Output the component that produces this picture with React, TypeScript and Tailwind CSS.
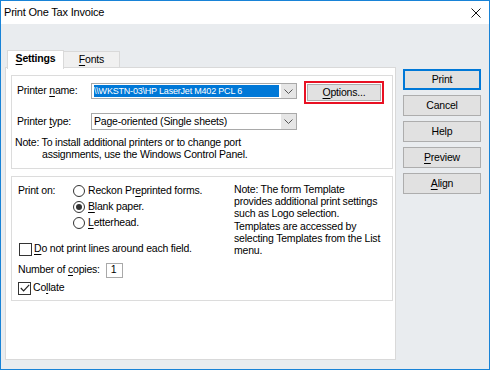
import React from "react";

const font = "font-['Liberation_Sans',Arial,sans-serif] text-[10.5px] tracking-[-0.2px]";

const U = ({ children }: { children: React.ReactNode }) => (
  <span className="underline underline-offset-[1.5px] decoration-[1px]">{children}</span>
);

const Chevron = () => (
  <svg width="9" height="5" viewBox="0 0 9 5" fill="none">
    <path d="M0.5 0.5 L4.5 4.5 L8.5 0.5" stroke="#555" strokeWidth="1" />
  </svg>
);

const Combo = ({ children }: { children: React.ReactNode }) => (
  <div className="w-[206px] h-full border border-[#a9a9a9] bg-white flex items-stretch">
    <div className="flex-1 min-w-0 flex items-center pl-[2px] overflow-hidden">{children}</div>
    <div className="w-[16px] bg-[#e6e6e6] border-l border-white flex items-center justify-center">
      <Chevron />
    </div>
  </div>
);

const Radio = ({ checked, children }: { checked?: boolean; children: React.ReactNode }) => (
  <div className="h-[16px] flex items-center gap-[3px]">
    <div className="w-[12px] h-[12px] rounded-full border border-[#333] bg-white flex items-center justify-center">
      {checked && <div className="w-[6px] h-[6px] rounded-full bg-[#333]" />}
    </div>
    <span>{children}</span>
  </div>
);

const Check = ({ checked }: { checked?: boolean }) => (
  <div className="w-[13px] h-[13px] border border-[#333] bg-white flex items-center justify-center">
    {checked && (
      <svg width="10" height="8" viewBox="0 0 10 8" fill="none">
        <path d="M0.8 4 L3.6 6.8 L9.2 0.8" stroke="#222" strokeWidth="1.2" />
      </svg>
    )}
  </div>
);

const SideButton = ({ children, primary }: { children: React.ReactNode; primary?: boolean }) => (
  <div
    className={`h-[21px] flex items-center justify-center bg-[#e1e1e1] ${
      primary ? "border-2 border-[#0078d7]" : "border border-[#adadad]"
    }`}
  >
    {children}
  </div>
);

export default function App() {
  return (
    <div className={`w-[490px] h-[370px] border border-[#1883d7] flex flex-col bg-[#e9ecef] text-black overflow-hidden ${font}`}>
      {/* Title bar */}
      <div className="h-[23px] bg-white flex items-center justify-between pl-[3px] pr-[8px]">
        <span className="text-[11px]">Print One Tax Invoice</span>
        <svg width="10" height="10" viewBox="0 0 10 10" fill="none">
          <path d="M0.5 0.5 L9.5 9.5 M9.5 0.5 L0.5 9.5" stroke="#111" strokeWidth="1" />
        </svg>
      </div>

      {/* Body */}
      <div className="flex-1 flex pl-[4px] pr-[7px]">
        {/* Tabs + panel */}
        <div className="w-[391px] flex flex-col pt-[26px] pb-[9px]">
          <div className="h-[17px] flex items-end pl-[2px]">
            <div className="relative z-10 w-[57px] h-[19px] -mb-[2px] bg-white border border-b-0 border-[#d9d9d9] flex items-center justify-center font-bold pb-[2px]">
              <span><U>S</U>ettings</span>
            </div>
            <div className="w-[56px] h-[16px] bg-[#f0f0f0] border border-l-0 border-b-0 border-[#d9d9d9] flex items-center justify-center">
              <span><U>F</U>onts</span>
            </div>
          </div>
          <div className="flex-1 border border-[#d9d9d9] bg-white pl-[5px] pr-[2px] pt-[7px] flex flex-col gap-[7px]">
            {/* Group 1 */}
            <div className="h-[94px] border border-[#dcdcdc] flex flex-col">
              <div className="h-[23px] mt-[5px] flex items-start">
                <div className="w-[79px] pl-[5px] h-[16px] mt-[2px] flex items-center">
                  <span>Printer <U>n</U>ame:</span>
                </div>
                <div className="h-[16px] mt-[2px]">
                  <Combo>
                    <div className="w-[185px] h-[12px] bg-[#0078d7] text-white text-[9px] leading-[12px] overflow-hidden whitespace-nowrap">
                      \\WKSTN-03\HP LaserJet M402 PCL 6
                    </div>
                  </Combo>
                </div>
                <div className="ml-[7px] w-[80px] h-[23px] border-2 border-[#e81123] p-[1px]">
                  <div className="h-full bg-[#e1e1e1] border border-[#adadad] flex items-center justify-center">
                    <span><U>O</U>ptions...</span>
                  </div>
                </div>
              </div>
              <div className="h-[17px] mt-[9px] flex items-stretch">
                <div className="w-[79px] pl-[5px] flex items-center">
                  <span>Printer <U>t</U>ype:</span>
                </div>
                <Combo>
                  <span className="whitespace-nowrap">Page-oriented (Single sheets)</span>
                </Combo>
              </div>
              <div className="mt-[6px] pl-[3px] leading-[12px]">
                <div>Note: To install additional printers or to change port</div>
                <div className="pl-[27px]">assignments, use the Windows Control Panel.</div>
              </div>
            </div>

            {/* Group 2 */}
            <div className="h-[125px] border border-[#dcdcdc] flex">
              <div className="w-[222px] pl-[6px] pt-[6px] flex flex-col">
                <div className="flex">
                  <div className="w-[55px] h-[16px] flex items-center">Print on:</div>
                  <div className="flex flex-col">
                    <Radio>Reckon Pr<U>e</U>printed forms.</Radio>
                    <Radio checked><U>B</U>lank paper.</Radio>
                    <Radio><U>L</U>etterhead.</Radio>
                  </div>
                </div>
                <div className="mt-[10px] h-[16px] flex items-center gap-[2px] pl-[1px]">
                  <Check />
                  <span><U>D</U>o not print lines around each field.</span>
                </div>
                <div className="mt-[5px] h-[16px] flex items-center">
                  <span>Number of <U>c</U>opies:</span>
                  <div className="ml-[6px] w-[17px] h-[15px] border border-[#a9a9a9] bg-white flex items-center pl-[4px]">
                    1
                  </div>
                </div>
                <div className="mt-[2px] h-[16px] flex items-center gap-[2px]">
                  <Check checked />
                  <span>Co<U>l</U>late</span>
                </div>
              </div>
              <div className="pt-[6px] leading-[12.2px] whitespace-nowrap">
                <div>Note: The form Template</div>
                <div>provides additional print settings</div>
                <div>such as Logo selection.</div>
                <div>Templates are accessed by</div>
                <div>selecting Templates from the List</div>
                <div>menu.</div>
              </div>
            </div>
          </div>
        </div>

        {/* Side buttons */}
        <div className="ml-[7px] w-[78px] pt-[45px] flex flex-col gap-[5px]">
          <SideButton primary>Print</SideButton>
          <SideButton>Cancel</SideButton>
          <SideButton>Help</SideButton>
          <SideButton><span><U>P</U>review</span></SideButton>
          <SideButton><span><U>A</U>lign</span></SideButton>
        </div>
      </div>
    </div>
  );
}
